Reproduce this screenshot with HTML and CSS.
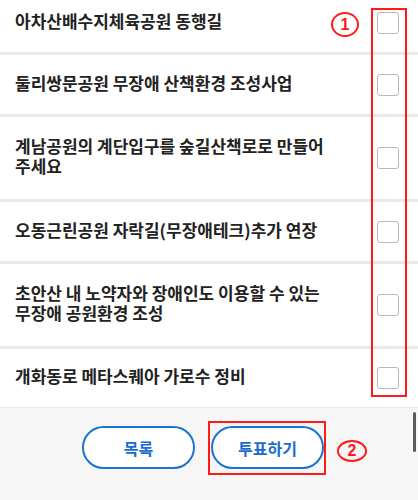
FILE: index.html
```html
<!DOCTYPE html>
<html>
<head>
    <title>주민투표</title>
    <link rel="stylesheet" href="styles.css">
</head>
<body>
    <div class="page">
        <ul class="vote-list">
            <li class="item"><span class="label">아차산배수지체육공원 동행길</span><span class="box"></span></li>
            <li class="item"><span class="label">둘리쌍문공원 무장애 산책환경 조성사업</span><span class="box"></span></li>
            <li class="item two"><span class="label">계남공원의 계단입구를 숲길산책로로 만들어 주세요</span><span class="box"></span></li>
            <li class="item"><span class="label">오동근린공원 자락길(무장애테크)추가 연장</span><span class="box"></span></li>
            <li class="item two"><span class="label">초안산 내 노약자와 장애인도 이용할 수 있는 무장애 공원환경 조성</span><span class="box"></span></li>
            <li class="item last"><span class="label">개화동로 메타스퀘아 가로수 정비</span><span class="box"></span></li>
        </ul>

        <div class="footer">
            <button class="btn">목록</button>
            <button class="btn">투표하기</button>
        </div>

        <!-- annotations -->
        <div class="mark mark-boxes"></div>
        <div class="num num-1">1</div>
        <div class="mark mark-vote"></div>
        <div class="num num-2">2</div>
        <div class="scrollbar"></div>
    </div>
</body>
</html>
```

FILE: styles.css
```css
body {
    margin: 0;
    font-family: "Noto Sans CJK KR", "Noto Sans", sans-serif;
    background: #fff;
}

.page {
    position: relative;
    width: 418px;
    height: 500px;
    overflow: hidden;
}

.vote-list {
    list-style: none;
    margin: -7px 0 0 0;
    padding: 0;
}

.item {
    display: flex;
    align-items: center;
    min-height: 62px;
    padding: 0 19px 0 15px;
    border-bottom: 3px solid #e9e9e9;
    box-sizing: border-box;
}

.item.two {
    min-height: 85px;
}

.item.last {
    min-height: 58px;
    border-bottom: none;
}

.label {
    flex: 1;
    font-size: 17px;
    line-height: 20px;
    font-weight: 700;
    color: #222;
    padding: 0 30px 4px 0;
    word-break: keep-all;
}

.box {
    width: 22px;
    height: 22px;
    box-sizing: border-box;
    border: 1.5px solid #b6b9be;
    border-radius: 3px;
    background: #fff;
}

.footer {
    display: flex;
    justify-content: center;
    gap: 16px;
    padding: 18px 12px 0 0;
    height: 100px;
    background: #f6f6f6;
    border-top: 1px solid #ebebeb;
}

.btn {
    width: 113px;
    height: 43px;
    border: 2px solid #1b73d3;
    border-radius: 22px;
    background: #fff;
    color: #1b6ccb;
    font-family: inherit;
    font-size: 16px;
    font-weight: 700;
}

.mark {
    position: absolute;
    border: 2px solid #ff1a1a;
    box-sizing: border-box;
}

.mark-boxes {
    left: 371px;
    top: 8px;
    width: 36px;
    height: 389px;
}

.mark-vote {
    left: 208px;
    top: 421px;
    width: 118px;
    height: 54px;
}

.num {
    position: absolute;
    box-sizing: border-box;
    border: 2px solid #ff1a1a;
    border-radius: 50%;
    color: #ff1a1a;
    font-family: "Liberation Sans", sans-serif;
    font-weight: 700;
    font-size: 16px;
    display: flex;
    align-items: center;
    justify-content: center;
}

.num-1 {
    left: 331px;
    top: 12px;
    width: 28px;
    height: 25px;
}

.num-2 {
    left: 337px;
    top: 440px;
    width: 30px;
    height: 22px;
}

.scrollbar {
    position: absolute;
    left: 413px;
    top: 412px;
    width: 3px;
    height: 40px;
    border-radius: 2px;
    background: #5a5a5a;
}
```
